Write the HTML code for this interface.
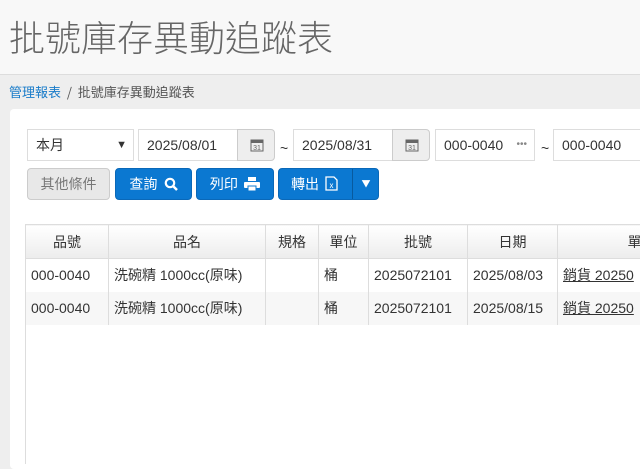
<!DOCTYPE html>
<html><head><meta charset="utf-8"><style>
*{box-sizing:border-box;margin:0;padding:0}
body{width:640px;height:462px;overflow:hidden;background:#eee;font-family:"Liberation Sans","Noto Sans CJK TC",sans-serif;font-size:14px;color:#333;position:relative}
.hdr{position:absolute;left:0;top:0;width:640px;height:75px;background:#f8f8f8;border-bottom:1px solid #ddd}
.hdr h1{position:absolute;left:9px;top:12px;font-size:36px;font-weight:300;color:#666;font-family:"Noto Sans CJK TC",sans-serif;line-height:48px}
.bc{position:absolute;left:9px;top:82px;font-size:13px;color:#555;font-family:"Noto Sans CJK TC",sans-serif}
.bc a{color:#1a7cc9}
.panel{position:absolute;left:10px;top:109px;width:640px;height:360px;background:#fff;border-radius:4px}
.ab{position:absolute}
.inp{position:absolute;border:1px solid #ddd;background:#fff;height:32px;line-height:30px;padding-left:8px;font-size:14px}
.cal{position:absolute;background:#eee;border:1px solid #ccc;height:32px;border-radius:0 4px 4px 0}
.btn{position:absolute;top:168px;height:32px;border-radius:4px;background:#0b78d1;border:1px solid #0a68b8;color:#fff;line-height:30px;font-size:14px;text-align:center;font-family:"Noto Sans CJK TC",sans-serif}
table{position:absolute;left:25px;top:224px;border-collapse:collapse;font-size:14px;table-layout:fixed;width:700px}
td,th{border:1px solid #ddd;height:33px;padding:0 5px;white-space:nowrap;font-weight:normal;overflow:hidden}
th{background:linear-gradient(#fff,#ececec);text-align:center;height:34px}
tr.alt td{background:#f7f7f7}
td{border-top:none;border-bottom:none}
</style></head><body>
<div class="hdr"><h1>批號庫存異動追蹤表</h1></div>
<div class="bc"><a>管理報表</a> &nbsp;/&nbsp; 批號庫存異動追蹤表</div>
<div class="panel"></div>
<div class="inp" style="left:27px;top:129px;width:107px">本月<span style="position:absolute;right:6px;top:0;font-size:11px">▼</span></div>
<div class="inp" style="left:138px;top:129px;width:100px">2025/08/01</div>
<div class="cal" style="left:237px;top:129px;width:38px"><svg width="14" height="14" style="position:absolute;left:12px;top:8px" viewBox="0 0 14 14"><rect x="1" y="2" width="12" height="11" fill="none" stroke="#666"/><rect x="1" y="2" width="12" height="3" fill="#666"/><text x="7" y="12" font-size="7" text-anchor="middle" fill="#666">31</text></svg></div>
<div class="ab" style="left:280px;top:140px">~</div>
<div class="inp" style="left:293px;top:129px;width:100px">2025/08/31</div>
<div class="cal" style="left:392px;top:129px;width:38px"><svg width="14" height="14" style="position:absolute;left:12px;top:8px" viewBox="0 0 14 14"><rect x="1" y="2" width="12" height="11" fill="none" stroke="#666"/><rect x="1" y="2" width="12" height="3" fill="#666"/><text x="7" y="12" font-size="7" text-anchor="middle" fill="#666">31</text></svg></div>
<div class="inp" style="left:435px;top:129px;width:100px">000-0040<span style="position:absolute;right:7px;color:#888;font-size:10px">•••</span></div>
<div class="ab" style="left:541px;top:140px">~</div>
<div class="inp" style="left:553px;top:129px;width:100px">000-0040<span style="position:absolute;left:86px;top:0;color:#888;font-size:10px">•••</span></div>
<div class="btn" style="left:27px;width:83px;background:#e8e8e8;border-color:#ccc;color:#777">其他條件</div>
<div class="btn" style="left:115px;width:77px">查詢 &nbsp;<svg width="14" height="14" viewBox="0 0 14 14" style="vertical-align:-2px"><circle cx="6" cy="6" r="4.2" fill="none" stroke="#fff" stroke-width="2.2"/><path d="M9 9l4 4" stroke="#fff" stroke-width="2.5"/></svg></div>
<div class="btn" style="left:196px;width:78px">列印 &nbsp;<svg width="16" height="14" viewBox="0 0 16 14" style="vertical-align:-2px"><rect x="4" y="0" width="8" height="4" fill="#fff"/><rect x="0" y="5" width="16" height="6" rx="1" fill="#fff"/><rect x="4" y="9" width="8" height="5" fill="#fff" stroke="#0b78d1"/></svg></div>
<div class="btn" style="left:278px;width:101px;text-align:left;padding-left:12px">轉出 &nbsp;<svg width="13" height="15" viewBox="0 0 13 15" style="vertical-align:-2px"><path d="M1 1h8l3 3v10H1z" fill="none" stroke="#fff" stroke-width="1.3"/><text x="6.5" y="12" font-size="8" text-anchor="middle" fill="#fff">x</text></svg><span style="position:absolute;left:73px;top:0;height:30px;border-left:1px solid #085a9e;width:27px;text-align:center;font-size:9px">▼</span></div>
<table>
<colgroup><col style="width:83px"><col style="width:157px"><col style="width:53px"><col style="width:50px"><col style="width:99px"><col style="width:90px"><col style="width:168px"></colgroup>
<tr><th>品號</th><th>品名</th><th>規格</th><th>單位</th><th>批號</th><th>日期</th><th>單據</th></tr>
<tr><td>000-0040</td><td>洗碗精 1000cc(原味)</td><td></td><td>桶</td><td>2025072101</td><td>2025/08/03</td><td><u>銷貨 20250</u></td></tr>
<tr class="alt"><td>000-0040</td><td>洗碗精 1000cc(原味)</td><td></td><td>桶</td><td>2025072101</td><td>2025/08/15</td><td><u>銷貨 20250</u></td></tr>
</table>
<div class="ab" style="left:25px;top:324px;width:1px;height:140px;background:#ddd"></div>
</body></html>
